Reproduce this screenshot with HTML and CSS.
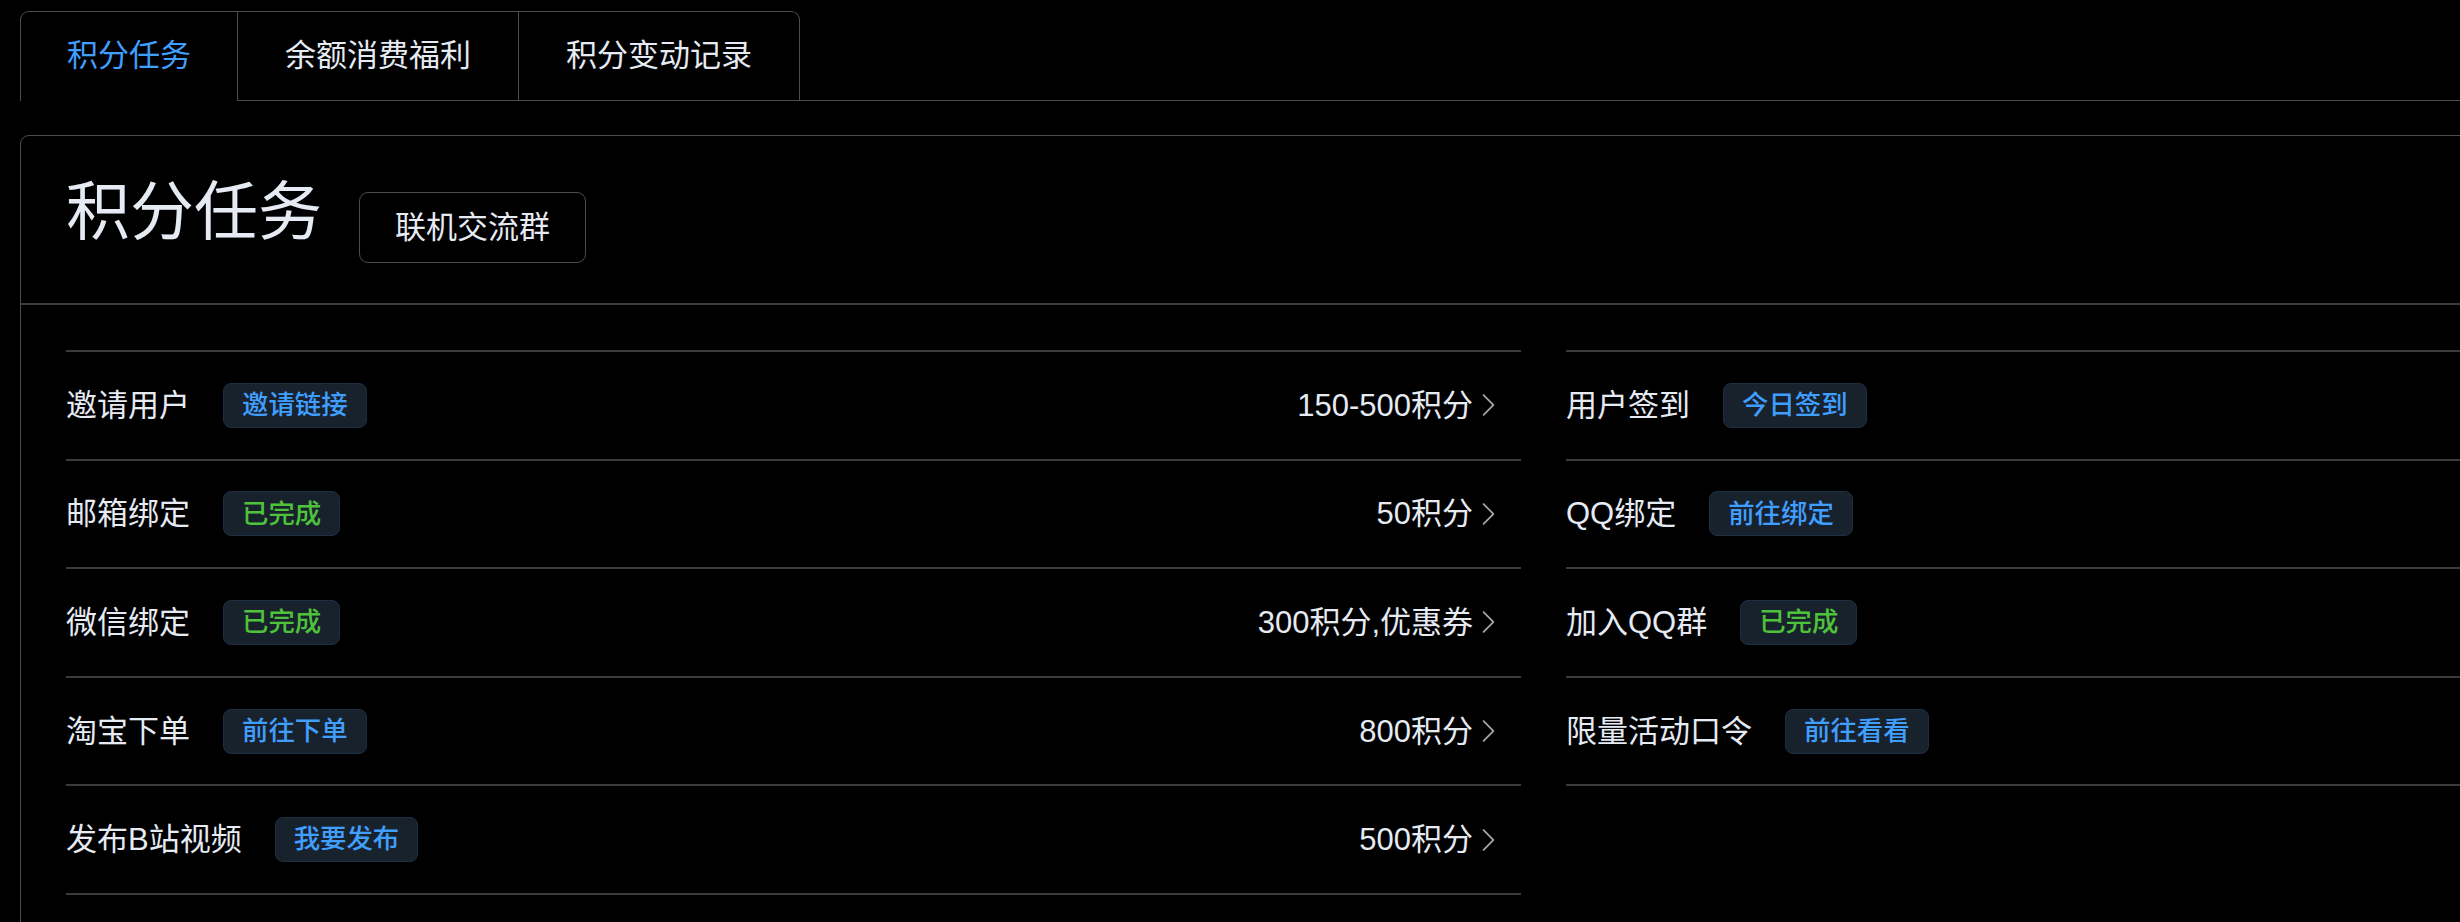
FILE: index.html
```html
<!DOCTYPE html>
<html lang="zh-CN">
<head>
<meta charset="utf-8">
<title>积分任务</title>
<link rel="stylesheet" href="styles.css">
</head>
<body>
<div class="page">
  <div class="tabs-header">
    <div class="tabs-nav">
      <div class="tab active">积分任务</div>
      <div class="tab">余额消费福利</div>
      <div class="tab">积分变动记录</div>
    </div>
  </div>

  <div class="card">
    <div class="card-header">
      <h1 class="title">积分任务</h1>
      <button class="btn">联机交流群</button>
    </div>
    <div class="card-body">
      <div class="task-col">
        <div class="task-row">
          <span class="task-name">邀请用户</span>
          <span class="tag">邀请链接</span>
          <span class="task-value">150-500积分<svg class="chev" viewBox="0 0 1024 1024"><path d="M340.864 149.312a30.592 30.592 0 0 0 0 42.752L652.736 512 340.864 831.872a30.592 30.592 0 0 0 0 42.752 29.12 29.12 0 0 0 41.728 0L714.24 534.336a32 32 0 0 0 0-44.672L382.592 149.376a29.120 29.120 0 0 0-41.728 0z"/></svg></span>
        </div>
        <div class="task-row">
          <span class="task-name">邮箱绑定</span>
          <span class="tag done">已完成</span>
          <span class="task-value">50积分<svg class="chev" viewBox="0 0 1024 1024"><path d="M340.864 149.312a30.592 30.592 0 0 0 0 42.752L652.736 512 340.864 831.872a30.592 30.592 0 0 0 0 42.752 29.12 29.12 0 0 0 41.728 0L714.24 534.336a32 32 0 0 0 0-44.672L382.592 149.376a29.12 29.12 0 0 0-41.728 0z"/></svg></span>
        </div>
        <div class="task-row">
          <span class="task-name">微信绑定</span>
          <span class="tag done">已完成</span>
          <span class="task-value">300积分,优惠券<svg class="chev" viewBox="0 0 1024 1024"><path d="M340.864 149.312a30.592 30.592 0 0 0 0 42.752L652.736 512 340.864 831.872a30.592 30.592 0 0 0 0 42.752 29.12 29.12 0 0 0 41.728 0L714.24 534.336a32 32 0 0 0 0-44.672L382.592 149.376a29.12 29.12 0 0 0-41.728 0z"/></svg></span>
        </div>
        <div class="task-row">
          <span class="task-name">淘宝下单</span>
          <span class="tag">前往下单</span>
          <span class="task-value">800积分<svg class="chev" viewBox="0 0 1024 1024"><path d="M340.864 149.312a30.592 30.592 0 0 0 0 42.752L652.736 512 340.864 831.872a30.592 30.592 0 0 0 0 42.752 29.12 29.12 0 0 0 41.728 0L714.24 534.336a32 32 0 0 0 0-44.672L382.592 149.376a29.12 29.12 0 0 0-41.728 0z"/></svg></span>
        </div>
        <div class="task-row">
          <span class="task-name">发布B站视频</span>
          <span class="tag">我要发布</span>
          <span class="task-value">500积分<svg class="chev" viewBox="0 0 1024 1024"><path d="M340.864 149.312a30.592 30.592 0 0 0 0 42.752L652.736 512 340.864 831.872a30.592 30.592 0 0 0 0 42.752 29.12 29.12 0 0 0 41.728 0L714.24 534.336a32 32 0 0 0 0-44.672L382.592 149.376a29.12 29.12 0 0 0-41.728 0z"/></svg></span>
        </div>
      </div>
      <div class="task-col">
        <div class="task-row">
          <span class="task-name">用户签到</span>
          <span class="tag">今日签到</span>
        </div>
        <div class="task-row">
          <span class="task-name">QQ绑定</span>
          <span class="tag">前往绑定</span>
        </div>
        <div class="task-row">
          <span class="task-name">加入QQ群</span>
          <span class="tag done">已完成</span>
        </div>
        <div class="task-row">
          <span class="task-name">限量活动口令</span>
          <span class="tag">前往看看</span>
        </div>
      </div>
    </div>
  </div>
</div>
</body>
</html>
```

FILE: styles.css
```css
html, body {
  margin: 0;
  padding: 0;
  background: #000;
  overflow: hidden;
}

body {
  font-family: "Liberation Sans", "Noto Sans CJK SC", sans-serif;
  color: #e5eaf3;
  font-size: 31px;
}

.page {
  width: 3047px;
  padding: 11px 0 0 20px;
}

/* tabs */
.tabs-header {
  display: flex;
  border-bottom: 1px solid #4c4d4f;
}

.tabs-nav {
  display: flex;
  border: 1px solid #4c4d4f;
  border-bottom: none;
  border-radius: 9px 9px 0 0;
  margin-bottom: -1px;
}

.tab {
  height: 88px;
  line-height: 88px;
  padding: 0 46px;
  font-size: 31px;
  color: #e5eaf3;
  border-bottom: 1px solid #4c4d4f;
}

.tab + .tab {
  border-left: 1px solid #4c4d4f;
  padding: 0 47px;
}

.tab.active {
  color: #409eff;
  border-bottom-color: #000;
}

/* card */
.card {
  margin-top: 34px;
  border: 1px solid #4c4d4f;
  border-radius: 9px;
  background: #000;
}

.card-header {
  height: 169px;
  box-sizing: border-box;
  padding: 44px 45px 0;
  border-bottom: 2px solid #3a3b3d;
  display: flex;
  align-items: flex-start;
}

.title {
  margin: 0;
  font-size: 64px;
  line-height: 64px;
  font-weight: 400;
  color: #e5eaf3;
}

.btn {
  margin: 12px 0 0 37px;
  height: 71px;
  padding: 0 35px;
  background: transparent;
  border: 1px solid #4c4d4f;
  border-radius: 9px;
  color: #e5eaf3;
  font-family: inherit;
  font-size: 31px;
  line-height: 1;
}

.card-body {
  display: grid;
  grid-template-columns: 1455px 1455px;
  column-gap: 45px;
  padding: 45px 45px;
}

.task-col {
  border-top: 2px solid #3a3b3d;
}

.task-row {
  height: 108.6px;
  box-sizing: border-box;
  border-bottom: 2px solid #3a3b3d;
  display: flex;
  align-items: center;
}

.task-name {
  font-size: 31px;
  line-height: 1;
  margin-right: 33px;
}

.tag {
  height: 45px;
  box-sizing: border-box;
  padding: 0 18px;
  display: inline-flex;
  align-items: center;
  font-size: 26.4px;
  font-weight: 500;
  line-height: 1;
  color: #409eff;
  background: #18222c;
  border: 1px solid #1d3043;
  border-radius: 8px;
}

.tag.done {
  color: #4ec23a;
}

.task-value {
  margin-left: auto;
  padding-right: 18px;
  display: flex;
  align-items: center;
  font-size: 31px;
  line-height: 1;
}

.chev {
  width: 30px;
  height: 30px;
  fill: #a3a6ad;
}
```
